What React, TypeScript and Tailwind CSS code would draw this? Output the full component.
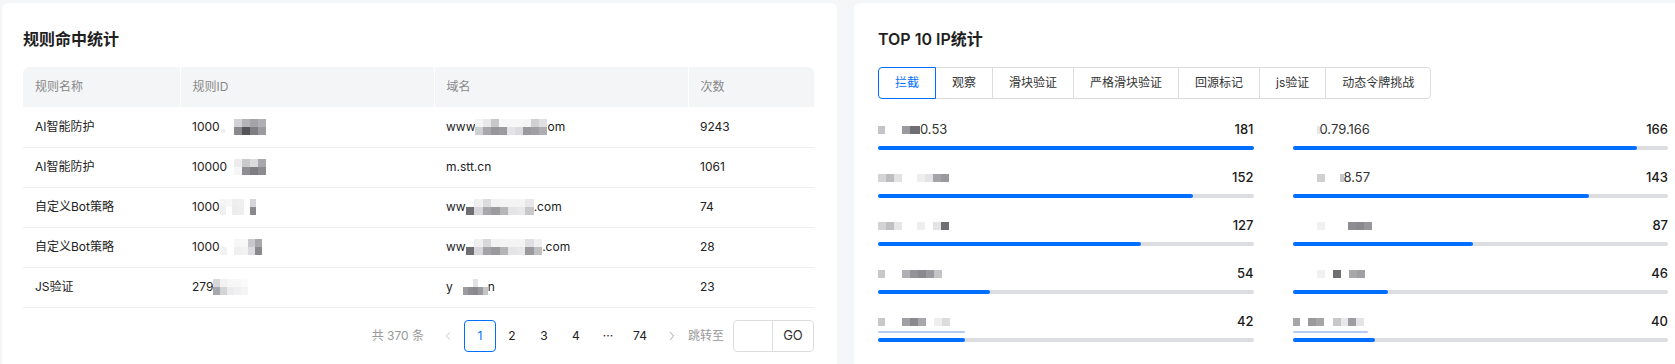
import { ChevronLeft, ChevronRight } from 'lucide-react'

type Seg = [string | null, number] | string

// redacted mosaic blocks: [colour, width] or null = blank gap, plain string = text
function Masked({ segs, h = 8 }: { segs: Seg[]; h?: number }) {
  return (
    <span className="inline-flex items-center">
      {segs.map((s, i) =>
        typeof s === 'string' ? (
          <span key={i}>{s}</span>
        ) : (
          <span key={i} className="inline-block" style={{ width: s[1], height: h, background: s[0] ?? 'transparent' }} />
        )
      )}
    </span>
  )
}

function Mosaic({ rows, w = 8, h = 8 }: { rows: string[][]; w?: number; h?: number }) {
  return (
    <span className="inline-flex flex-col align-middle">
      {rows.map((r, i) => (
        <span key={i} className="flex">
          {r.map((c, j) => (
            <span key={j} style={{ width: w, height: h, background: c }} />
          ))}
        </span>
      ))}
    </span>
  )
}

const ruleRows = [
  {
    name: 'AI智能防护',
    id: (
      <span className="inline-flex items-center">
        1000
        <span className="ml-[1px] mr-[9px] inline-block w-[4px] h-[4px] mt-[8px] bg-[#eeeeee]" />
        <Mosaic rows={[['#d2d2d5', '#b4b4b8', '#a4a4a8', '#b0b0b4'], ['#8a8a8e', '#55555b', '#7e7e83', '#9c9ca0']]} />
      </span>
    ),
    domain: (
      <span className="inline-flex items-center">
        www
        <Mosaic rows={[['#f4f4f5', '#e8e8ea', '#c8c8cb', '#f7f7f8', '#f7f7f8', '#f7f7f8', '#f4f4f5', '#d0d0d2', '#e0e0e2'], ['#d0d0d2', '#a8a8ab', '#96969a', '#9c9ca0', '#e4e4e6', '#dcdcde', '#9a9a9e', '#a0a0a4', '#aeaeb1']]} />
        om
      </span>
    ),
    count: '9243',
  },
  {
    name: 'AI智能防护',
    id: (
      <span className="inline-flex items-center">
        10000
        <span className="w-[7px]" />
        <Mosaic rows={[['#ececee', '#cacacd', '#dadadc', '#a8a8ac'], ['#f6f6f7', '#8e8e92', '#7e7e82', '#8c8c90']]} />
      </span>
    ),
    domain: <span>m.stt.cn</span>,
    count: '1061',
  },
  {
    name: '自定义Bot策略',
    id: (
      <span className="inline-flex items-center">
        1000
        <Mosaic rows={[['#f4f4f5', '#f7f7f8', '#eeeeef', '#f0f0f1', '#ffffff', '#d6d6d8'], ['#f0f0f1', '#ffffff', '#ececee', '#eeeeef', '#ffffff', '#8a8a8e']]} w={6} />
      </span>
    ),
    domain: (
      <span className="inline-flex items-center">
        ww
        <Mosaic rows={[['#ffffff', '#f0f0f1', '#dcdcde', '#f2f2f3', '#f4f4f5', '#f4f4f5', '#f4f4f5', '#e8e8ea'], ['#6e6e73', '#d8d8da', '#a8a8ac', '#9c9ca0', '#b6b6b9', '#e4e4e6', '#e8e8ea', '#c8c8cb']]} w={8.5} />
        .com
      </span>
    ),
    count: '74',
  },
  {
    name: '自定义Bot策略',
    id: (
      <span className="inline-flex items-center">
        1000
        <Mosaic rows={[['#ffffff', '#ffffff', '#f6f6f7', '#f7f7f8', '#c8c8cb', '#a8a8ac'], ['#f2f2f3', '#ffffff', '#f0f0f1', '#f2f2f3', '#dcdcde', '#8a8a8e']]} w={7} />
      </span>
    ),
    domain: (
      <span className="inline-flex items-center">
        ww
        <Mosaic rows={[['#ffffff', '#f0f0f1', '#d8d8da', '#f2f2f3', '#f4f4f5', '#f4f4f5', '#f4f4f5', '#e0e0e2', '#f0f0f1'], ['#6e6e73', '#d8d8da', '#a4a4a8', '#9a9a9e', '#b4b4b7', '#e4e4e6', '#e8e8ea', '#9a9a9e', '#c0c0c3']]} w={8.5} />
        .com
      </span>
    ),
    count: '28',
  },
  {
    name: 'JS验证',
    id: (
      <span className="inline-flex items-center">
        279
        <Mosaic rows={[['#d8d8da', '#f2f2f3', '#f7f7f8', '#f7f7f8', '#fafafa'], ['#a8a8ac', '#d4d4d6', '#ececee', '#f0f0f1', '#f4f4f5']]} w={7} />
      </span>
    ),
    domain: (
      <span className="inline-flex items-center">
        y<span className="w-[10px]" />
        <Mosaic rows={[['#ffffff', '#ffffff', '#e2e2e4', '#ffffff', '#ffffff'], ['#9c9ca0', '#8e8e92', '#8a8a8e', '#9a9a9e', '#c4c4c7']]} w={5} />
        n
      </span>
    ),
    count: '23',
  },
]

const tabs = ['拦截', '观察', '滑块验证', '严格滑块验证', '回源标记', 'js验证', '动态令牌挑战']

type IpRow = { label: Seg[]; value: number; ghost?: number }

const MAX = 181

const leftIps: IpRow[] = [
  { label: [['#c4c4c8', 7], [null, 17], ['#9a9a9e', 8], ['#6e6e73', 10], '0.53'], value: 181 },
  { label: [['#d4d4d6', 8], ['#bdbdc0', 8], ['#e2e2e4', 8], [null, 15], ['#eeeeef', 8], ['#e4e4e6', 8], ['#a4a4a8', 8], ['#9a9a9e', 8]], value: 152 },
  { label: [['#d4d4d6', 8], ['#c0c0c3', 8], ['#e6e6e8', 8], [null, 15], ['#eeeeef', 8], [null, 8], ['#e4e4e6', 8], ['#6e6e73', 8]], value: 127 },
  { label: [['#c8c8cb', 7], [null, 17], ['#b0b0b4', 8], ['#949498', 8], ['#8a8a8e', 8], ['#9a9a9e', 8], ['#c4c4c7', 8]], value: 54 },
  { label: [['#c8c8cb', 7], [null, 17], ['#a0a0a4', 8], ['#8a8a8e', 8], ['#a8a8ac', 8], [null, 8], ['#eeeeef', 8], ['#dcdcde', 8]], value: 42, ghost: 87 },
]

const rightIps: IpRow[] = [
  { label: [[null, 24], ['#e6e6e8', 3], '0.79.166'], value: 166 },
  { label: [[null, 24], ['#d0d0d2', 8], [null, 15], ['#c8c8ca', 4], '8.57'], value: 143 },
  { label: [[null, 24], ['#f0f0f1', 8], [null, 23], ['#8e8e92', 8], ['#8a8a8e', 8], ['#97979b', 8]], value: 87 },
  { label: [[null, 24], ['#f0f0f1', 8], [null, 8], ['#6e6e73', 8], [null, 8], ['#a8a8ab', 8], ['#a0a0a4', 8]], value: 46 },
  { label: [['#a6a6a9', 7], [null, 8], ['#9a9a9e', 8], ['#a6a6a9', 8], [null, 9], ['#c8c8ca', 8], ['#e8e8ea', 7], ['#9e9ea2', 8], ['#e4e4e6', 8]], value: 40, ghost: 75 },
]

function IpBar({ row }: { row: IpRow }) {
  return (
    <div className="relative">
      <div className="flex h-5 items-center justify-between text-[13px]">
        <span className="text-[#333333]">
          <Masked segs={row.label} />
        </span>
        <span className="font-medium text-[#1a1a1a]">{row.value}</span>
      </div>
      {row.ghost && (
        <div className="absolute left-0 top-[19px] h-[2px] bg-[#b4cbf6] rounded-full" style={{ width: row.ghost }} />
      )}
      <div className="mt-[6px] h-1 w-full rounded-full bg-[#dcdde1]">
        <div className="h-1 rounded-full bg-[#006eff]" style={{ width: `${(row.value / MAX) * 100}%` }} />
      </div>
    </div>
  )
}

export default function App() {
  return (
    <div
      className="h-[364px] w-[1675px] overflow-hidden bg-[#f5f6f8] pl-[2px] pt-[3px]"
      style={{ fontFamily: 'Inter, "Noto Sans CJK SC", sans-serif' }}
    >
      <div className="flex gap-[17px]">
        {/* 规则命中统计 */}
        <div className="h-[400px] w-[835px] shrink-0 rounded-md bg-white pl-[21px] pr-[23px] pt-6">
          <h2 className="h-6 text-base font-semibold leading-6 text-[#1f1f1f]">规则命中统计</h2>
          <table className="mt-4 w-full table-fixed border-collapse text-xs text-[#222222]">
            <colgroup>
              <col className="w-[157px]" />
              <col className="w-[254px]" />
              <col className="w-[254px]" />
              <col />
            </colgroup>
            <thead>
              <tr className="h-10 bg-[#f4f5f7] text-left text-[#888888]">
                <th className="rounded-tl-md px-3 font-normal">规则名称</th>
                <th className="border-l border-white px-3 font-normal">规则ID</th>
                <th className="border-l border-white px-3 font-normal">域名</th>
                <th className="rounded-tr-md border-l border-white px-3 font-normal">次数</th>
              </tr>
            </thead>
            <tbody>
              {ruleRows.map((r, i) => (
                <tr key={i} className="h-10 border-b border-[#eeeeee]">
                  <td className="px-3">{r.name}</td>
                  <td className="px-3">{r.id}</td>
                  <td className="px-3">{r.domain}</td>
                  <td className="px-3">{r.count}</td>
                </tr>
              ))}
            </tbody>
          </table>

          <div className="mt-3 flex h-8 items-center justify-end text-xs">
            <span className="mr-2 text-[#999999]">共 370 条</span>
            <span className="flex h-8 w-8 items-center justify-center text-[#c0c0c0]">
              <ChevronLeft size={14} strokeWidth={1.5} />
            </span>
            <span className="flex h-8 w-8 items-center justify-center rounded border border-[#006eff] text-[#006eff]">1</span>
            {['2', '3', '4', '···', '74'].map((p) => (
              <span key={p} className="flex h-8 w-8 items-center justify-center text-[#222222]">
                {p}
              </span>
            ))}
            <span className="flex h-8 w-8 items-center justify-center text-[#999999]">
              <ChevronRight size={14} strokeWidth={1.5} />
            </span>
            <span className="ml-0 mr-[9px] text-[#999999]">跳转至</span>
            <span className="h-8 w-10 rounded-l border border-[#dddddd]" />
            <span className="-ml-px flex h-8 w-[42px] items-center justify-center rounded-r border border-[#dddddd] text-[13px] text-[#333333]">
              GO
            </span>
          </div>
        </div>

        {/* TOP 10 IP统计 */}
        <div className="h-[400px] w-[838px] shrink-0 rounded-md bg-white px-6 pt-6">
          <h2 className="h-6 text-base font-semibold leading-6 text-[#1f1f1f]">TOP 10 IP统计</h2>
          <div className="mt-4 flex h-8">
            {tabs.map((t, i) => (
              <span
                key={t}
                className={
                  'flex h-8 items-center border px-4 text-xs ' +
                  (i > 0 ? '-ml-px ' : '') +
                  (i === 0 ? 'rounded-l ' : '') +
                  (i === tabs.length - 1 ? 'rounded-r ' : '') +
                  (i === 0 ? 'relative z-10 border-[#006eff] text-[#006eff]' : 'border-[#dcdcdc] text-[#333333]')
                }
              >
                {t}
              </span>
            ))}
          </div>
          <div className="mt-[21px] grid grid-cols-2 gap-x-[39px]">
            <div className="flex flex-col gap-[18px]">
              {leftIps.map((r, i) => (
                <IpBar key={i} row={r} />
              ))}
            </div>
            <div className="flex flex-col gap-[18px]">
              {rightIps.map((r, i) => (
                <IpBar key={i} row={r} />
              ))}
            </div>
          </div>
        </div>
      </div>
    </div>
  )
}
